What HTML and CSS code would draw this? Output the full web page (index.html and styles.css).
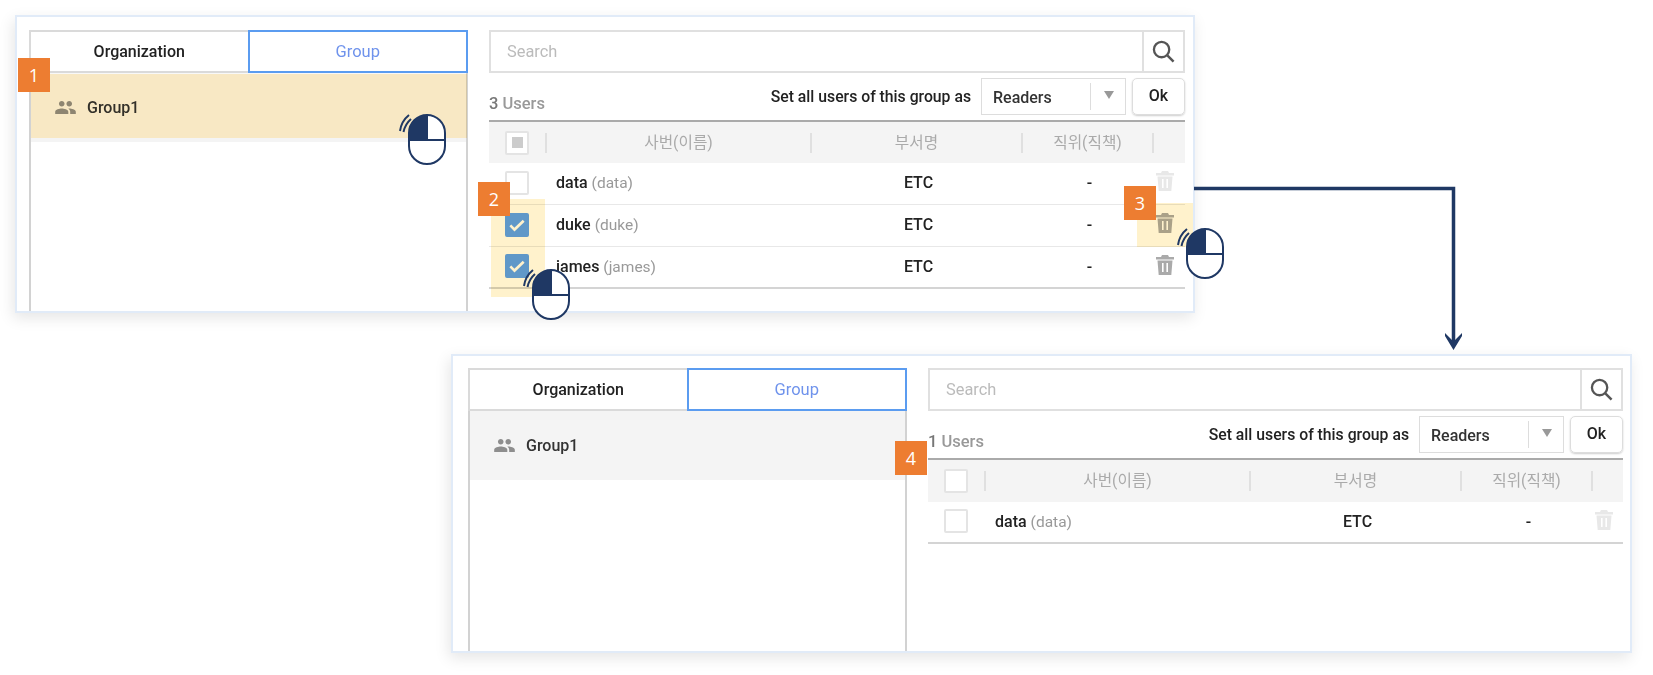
FILE: index.html
```html
<!DOCTYPE html>
<html lang="ko">
<head>
    <meta charset="UTF-8">
    <title>Group users</title>
    <link rel="stylesheet" href="styles.css">
</head>
<body>
<svg class="defs" width="0" height="0">
    <symbol id="ic-group" viewBox="0 4 24 16">
        <path d="M16 11c1.66 0 2.99-1.34 2.99-3S17.66 5 16 5c-1.66 0-3 1.34-3 3s1.34 3 3 3zm-8 0c1.66 0 2.99-1.34 2.99-3S9.66 5 8 5C6.34 5 5 6.34 5 8s1.34 3 3 3zm0 2c-2.33 0-7 1.17-7 3.5V19h14v-2.5c0-2.33-4.67-3.5-7-3.5zm8 0c-.29 0-.62.02-.97.05 1.16.84 1.97 1.97 1.97 3.45V19h6v-2.5c0-2.33-4.67-3.5-7-3.5z"/>
    </symbol>
    <symbol id="ic-search" viewBox="0 0 24 24">
        <circle cx="10" cy="10" r="8" fill="none" stroke="#555" stroke-width="2.4"/>
        <path d="M16 16l6.5 6.5" fill="none" stroke="#555" stroke-width="2.6"/>
    </symbol>
    <symbol id="ic-trash" viewBox="0 0 18 20">
        <path fill-rule="evenodd" d="M6 0h6l1 2h5v2.4H0V2h5zM1.5 5.4h15L15.3 20H2.7zM6 8v9h1.6V8zm4.4 0v9H12V8z"/>
    </symbol>
    <symbol id="ic-mouse" viewBox="0 0 48 56">
        <rect x="10" y="4" width="36" height="49" rx="18" ry="18" fill="#fff" stroke="#1f3864" stroke-width="2"/>
        <path d="M10 29V22A18 18 0 0 1 28 4V29z" fill="#1f3864"/>
        <path d="M10 29H46M28 4V29" fill="none" stroke="#1f3864" stroke-width="2"/>
        <path d="M1 20C2 13 5 8 10 4M4.500 21C5.500 16 8 11.500 12 8" fill="none" stroke="#1f3864" stroke-width="2"/>
    </symbol>
</svg>

<div class="page">
    <section class="panel panel-first">
        <div class="side">
            <div class="tabs">
                <div class="tab">Organization</div>
                <div class="tab tab-on">Group</div>
            </div>
            <div class="group-row">
                <svg class="group-icon"><use href="#ic-group"/></svg>
                <span>Group1</span>
            </div>
        </div>
        <div class="main">
            <div class="search">
                <div class="search-text">Search</div>
                <div class="search-btn"><svg class="search-icon"><use href="#ic-search"/></svg></div>
            </div>
            <div class="toolbar">
                <div class="count"><b>3</b> Users</div>
                <div class="set-label">Set all users of this group as</div>
                <div class="select">
                    <span class="select-value">Readers</span>
                    <span class="select-arrow"></span>
                </div>
                <div class="ok">Ok</div>
            </div>
            <table>
                <thead>
                    <tr>
                        <th class="col-check"><span class="check check-part"></span></th>
                        <th class="col-name"><div class="th-in">사번(이름)</div></th>
                        <th class="col-dept"><div class="th-in">부서명</div></th>
                        <th class="col-rank"><div class="th-in">직위(직책)</div></th>
                        <th class="col-del"><div class="th-in"></div></th>
                    </tr>
                </thead>
                <tbody>
                    <tr>
                        <td><span class="check"></span></td>
                        <td class="name">data <span class="uid">(data)</span></td>
                        <td class="mid">ETC</td>
                        <td class="mid">-</td>
                        <td class="del"><svg class="trash trash-off"><use href="#ic-trash"/></svg></td>
                    </tr>
                    <tr>
                        <td><span class="check check-on"><svg viewBox="0 0 24 24"><path d="M4 12.500l5 5L20 7" fill="none" stroke="#fff" stroke-width="3.200"/></svg></span></td>
                        <td class="name">duke <span class="uid">(duke)</span></td>
                        <td class="mid">ETC</td>
                        <td class="mid">-</td>
                        <td class="del"><svg class="trash"><use href="#ic-trash"/></svg></td>
                    </tr>
                    <tr>
                        <td><span class="check check-on"><svg viewBox="0 0 24 24"><path d="M4 12.500l5 5L20 7" fill="none" stroke="#fff" stroke-width="3.200"/></svg></span></td>
                        <td class="name">james <span class="uid">(james)</span></td>
                        <td class="mid">ETC</td>
                        <td class="mid">-</td>
                        <td class="del"><svg class="trash"><use href="#ic-trash"/></svg></td>
                    </tr>
                </tbody>
            </table>
        </div>
    </section>

    <section class="panel panel-second">
        <div class="side">
            <div class="tabs">
                <div class="tab">Organization</div>
                <div class="tab tab-on">Group</div>
            </div>
            <div class="group-row">
                <svg class="group-icon"><use href="#ic-group"/></svg>
                <span>Group1</span>
            </div>
        </div>
        <div class="main">
            <div class="search">
                <div class="search-text">Search</div>
                <div class="search-btn"><svg class="search-icon"><use href="#ic-search"/></svg></div>
            </div>
            <div class="toolbar">
                <div class="count"><b>1</b> Users</div>
                <div class="set-label">Set all users of this group as</div>
                <div class="select">
                    <span class="select-value">Readers</span>
                    <span class="select-arrow"></span>
                </div>
                <div class="ok">Ok</div>
            </div>
            <table>
                <thead>
                    <tr>
                        <th class="col-check"><span class="check"></span></th>
                        <th class="col-name"><div class="th-in">사번(이름)</div></th>
                        <th class="col-dept"><div class="th-in">부서명</div></th>
                        <th class="col-rank"><div class="th-in">직위(직책)</div></th>
                        <th class="col-del"><div class="th-in"></div></th>
                    </tr>
                </thead>
                <tbody>
                    <tr>
                        <td><span class="check"></span></td>
                        <td class="name">data <span class="uid">(data)</span></td>
                        <td class="mid">ETC</td>
                        <td class="mid">-</td>
                        <td class="del"><svg class="trash trash-off"><use href="#ic-trash"/></svg></td>
                    </tr>
                </tbody>
            </table>
        </div>
    </section>

    <!-- annotations on top of the screenshots -->
    <div class="mark mark-row"></div>
    <div class="mark mark-checks"></div>
    <div class="mark mark-trash"></div>

    <svg class="arrow" viewBox="0 0 280 175">
        <path d="M4 8.500H263.500V162" fill="none" stroke="#1f3864" stroke-width="3.500"/>
        <path d="M255 153l8.500 8.500 8.500-8.500v3l-8.500 14-8.500-14z" fill="#1f3864"/>
    </svg>

    <div class="badge badge-1">1</div>
    <div class="badge badge-2">2</div>
    <div class="badge badge-3">3</div>
    <div class="badge badge-4">4</div>

    <svg class="mouse mouse-1"><use href="#ic-mouse"/></svg>
    <svg class="mouse mouse-2"><use href="#ic-mouse"/></svg>
    <svg class="mouse mouse-3"><use href="#ic-mouse"/></svg>
</div>
</body>
</html>
```

FILE: styles.css
```css
/* Global */
html, body {
    margin: 0;
    padding: 0;
    height: 675px;
    overflow: hidden;
    background: #fff;
}

body {
    font-family: Roboto, "Noto Sans CJK KR", sans-serif;
    font-size: 16px;
    color: #222;
}

.defs {
    display: block;
    height: 0;
}

.page {
    position: relative;
    width: 1653px;
    height: 675px;
    padding-top: 15px;
    box-sizing: border-box;
}

/* Panels */
.panel {
    display: flex;
    box-sizing: border-box;
    background: #fff;
    border: 2px solid #e1ebf8;
    padding: 13px 8px 0 12px;
    box-shadow: -2px 5px 14px rgba(0, 0, 0, 0.1);
}

.panel-first {
    margin-left: 15px;
    width: 1180px;
    height: 298px;
}

.panel-second {
    margin-left: 451px;
    margin-top: 41px;
    width: 1181px;
    height: 299px;
    padding: 12px 7px 0 15px;
}

/* Left column */
.side {
    width: 439px;
    box-sizing: border-box;
    border-left: 2px solid #d2d2d2;
    border-right: 2px solid #d2d2d2;
}

.tabs {
    display: flex;
    margin: 0 -2px;
    height: 43px;
}

.tab {
    flex: 1;
    box-sizing: border-box;
    border: 2px solid #dadada;
    border-right: 0;
    text-align: center;
    line-height: 39px;
    font-weight: 500;
}

.tab-on {
    border: 2px solid #5b9cf0;
    color: #6f93ec;
    font-size: 16.500px;
    font-weight: 400;
}

.group-row {
    display: flex;
    align-items: center;
    height: 69px;
    padding: 0 0 1px 23px;
    box-sizing: border-box;
    background: #f4f4f4;
    font-weight: 500;
    color: #333;
}

/* the highlighted row of the first panel sits a bit lighter under its mark */
.panel-first .group-row {
    background: linear-gradient(#f8f8f8 65px, #f4f4f4 65px);
}

.group-icon {
    width: 23px;
    height: 15px;
    margin-right: 10px;
    fill: #8e8e8e;
}

/* Right column */
.main {
    width: 696px;
    margin-left: 21px;
}

.panel-second .main {
    width: 695px;
}

.search {
    display: flex;
    height: 43px;
    box-sizing: border-box;
    border: 2px solid #e0e0e0;
}

.search-text {
    flex: 1;
    padding-left: 16px;
    line-height: 39px;
    color: #bbb;
    font-size: 16.400px;
}

.search-btn {
    width: 39px;
    border-left: 2px solid #e0e0e0;
    display: flex;
    align-items: center;
    justify-content: center;
}

.search-icon {
    width: 23px;
    height: 23px;
}

.toolbar {
    display: flex;
    align-items: flex-start;
    height: 37px;
    margin-top: 5px;
}

.count {
    flex: 1;
    padding-top: 16px;
    color: #999;
    font-size: 16.500px;
    font-weight: 500;
}

.count b {
    color: #777;
    font-weight: 500;
}

.set-label {
    margin-right: 10px;
    line-height: 38px;
    font-size: 15.750px;
    font-weight: 500;
}

.select {
    display: flex;
    align-items: center;
    width: 145px;
    height: 37px;
    box-sizing: border-box;
    border: 1px solid #ddd;
    padding-left: 11px;
}

.select-value {
    width: 97px;
    height: 27px;
    line-height: 30px;
    border-right: 1px solid #ddd;
    font-weight: 500;
    color: #333;
}

.select-arrow {
    width: 0;
    height: 0;
    margin: -3px 0 0 13px;
    border-left: 5.500px solid transparent;
    border-right: 5.500px solid transparent;
    border-top: 8px solid #999;
}

.ok {
    flex: 0 0 53px;
    height: 37px;
    margin-left: 6px;
    box-sizing: border-box;
    border: 1px solid #ddd;
    border-radius: 5px;
    box-shadow: 0 1px 2px rgba(0, 0, 0, 0.2);
    text-align: center;
    line-height: 34px;
    font-weight: 500;
}

/* User table */
table {
    width: 100%;
    margin-top: 5px;
    table-layout: fixed;
    border-collapse: separate;
    border-spacing: 0;
}

th {
    height: 41px;
    padding: 0;
    border-top: 2px solid #aaa;
    background: #f4f4f4;
    font-weight: 400;
    color: #aaa;
    box-sizing: content-box;
}

.panel-second th {
    height: 42px;
}

.col-check { width: 56px; }
.col-name { width: 265px; }
.col-dept { width: 211px; }
.col-rank { width: 131px; }

.th-in {
    height: 20px;
    line-height: 20px;
    border-left: 2px solid #e0e0e0;
    font-size: 15.700px;
}

td {
    height: 42px;
    padding: 0 0 2px;
    box-sizing: border-box;
    border-bottom: 1px solid #e8e8e8;
    font-weight: 500;
}

tbody tr:last-child td {
    border-bottom: 2px solid #d4d4d4;
}

.name {
    padding-left: 11px;
}

.uid {
    color: #999;
    font-size: 15.500px;
    font-weight: 400;
}

.mid {
    padding-left: 6px;
    text-align: center;
}

.del {
    vertical-align: top;
}

.check {
    display: flex;
    align-items: center;
    justify-content: center;
    width: 24px;
    height: 24px;
    margin-left: 16px;
    box-sizing: border-box;
    background: #fff;
    border: 2px solid #e4e4e4;
    border-radius: 2px;
}

.check-part::after {
    content: "";
    width: 11px;
    height: 11px;
    background: #ccc;
}

/* goes through the yellow mark, so the blue is set brighter than it ends up */
.check-on {
    background: #60a0fa;
    border-color: #60a0fa;
}

.check-on svg {
    width: 20px;
    height: 20px;
}

.trash {
    display: block;
    width: 18px;
    height: 20px;
    margin: 8px 0 0 4px;
    fill: #aaa;
}

.trash-off {
    fill: #e8e8e8;
}

/* Annotations */
.mark {
    position: absolute;
    background: #fff2cc;
    mix-blend-mode: multiply;
}

.mark-row {
    left: 31px;
    top: 74px;
    width: 436px;
    height: 64px;
    background: #ffefca;
}

.mark-checks {
    left: 491px;
    top: 199px;
    width: 54px;
    height: 98px;
}

.mark-trash {
    left: 1137px;
    top: 203px;
    width: 56px;
    height: 44px;
}

.badge {
    position: absolute;
    width: 32px;
    height: 34px;
    background: #ed7d31;
    color: #fff;
    font-family: "Open Sans", sans-serif;
    font-size: 18px;
    line-height: 34px;
    text-align: center;
}

.badge-1 { left: 18px; top: 58px; }
.badge-2 { left: 478px; top: 182px; }
.badge-3 { left: 1124px; top: 186px; }
.badge-4 { left: 895px; top: 441px; }

.mouse {
    position: absolute;
    width: 48px;
    height: 56px;
}

.mouse-1 { left: 399px; top: 111px; }
.mouse-2 { left: 523px; top: 266px; }
.mouse-3 { left: 1177px; top: 225px; }

.arrow {
    position: absolute;
    left: 1190px;
    top: 180px;
    width: 280px;
    height: 175px;
}
```
